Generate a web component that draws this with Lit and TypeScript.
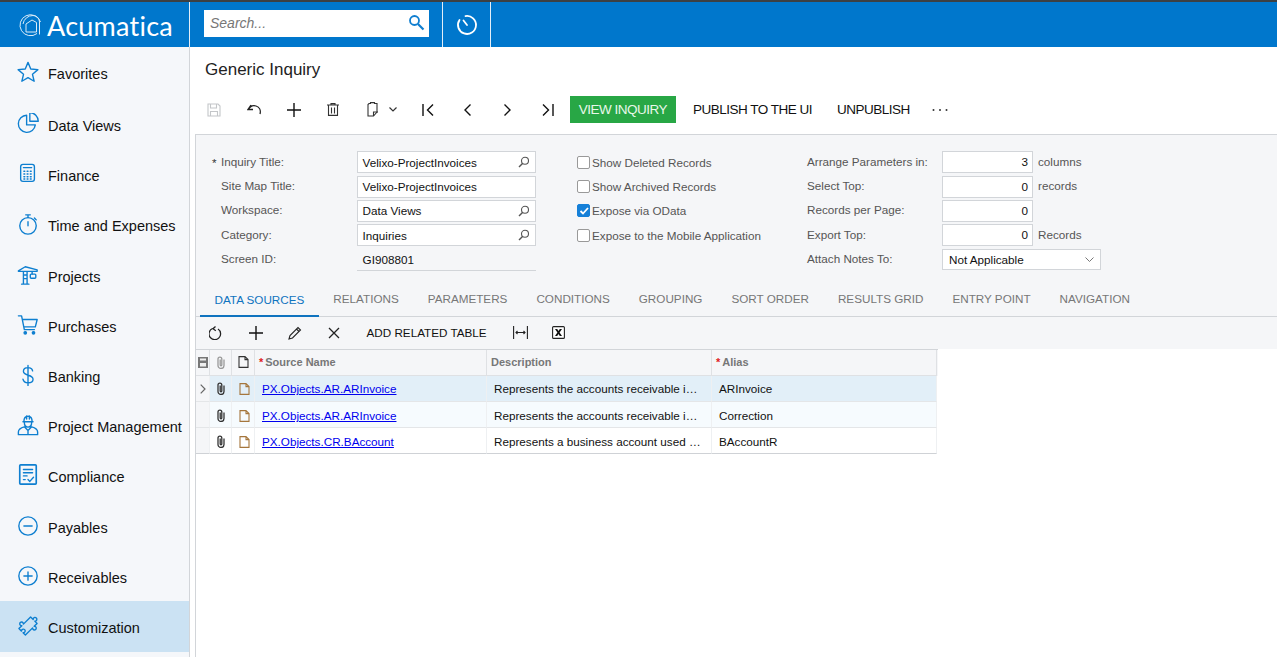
import { LitElement, html, css, svg } from "lit";
import { customElement } from "lit/decorators.js";

const s = (vb: string, w: number, body: any, cls = "") =>
  html`<svg class="ic ${cls}" width=${w} height=${w} viewBox=${vb} fill="none" stroke="currentColor" stroke-width="1.5" stroke-linecap="round" stroke-linejoin="round">${body}</svg>`;

const navIcons: Record<string, any> = {
  star: svg`<path d="M12 1.500l3 7.200 7.800.7-5.900 5.100 1.800 7.600L12 18.100l-6.700 4 1.800-7.600L1.200 9.400 9 8.700z"/>`,
  pie: svg`<g transform="translate(0 -2)"><path d="M10.500 4.500A9.300 9.300 0 1 0 20 15h-9.500z"/><path d="M14 1.500V11h9.200A9.500 9.500 0 0 0 14 1.500z"/></g>`,
  calc: svg`<rect x="4" y="1.500" width="15" height="18.500" rx="2.500"/><path d="M7 5h9M7.500 9h1M11 9h1M14.500 9h1M7.500 12h1M11 12h1M14.500 12h1M7.500 15h1M11 15h1M14.500 15h1M7.500 17.500h1M11 17.500h1M14.500 17.500h1"/>`,
  timer: svg`<circle cx="12" cy="14" r="9"/><path d="M12 9.500V14M9.500 2h5M12 2v3M19 5.500l2 2"/>`,
  crane: svg`<path d="M1.500 7.500L9 3l13 3.500v1.500H1.500zM7 8v14M11 8v14M5 22h8M7 12h4M7 16h4M16.500 8v3"/><rect x="14.500" y="11" width="6" height="4.500" rx="1"/>`,
  cart: svg`<path d="M1.500 2h3.500l3 15h11M6 6h16l-2 8H7.500"/><circle cx="9" cy="20.500" r="1.300" fill="currentColor"/><circle cx="18" cy="20.500" r="1.300" fill="currentColor"/>`,
  dollar: svg`<path d="M17 7.500C16.500 5 14.500 4 12 4 9 4 7 5.500 7 8c0 5.500 10.500 3 10.500 8.500 0 2.500-2.500 4-5.500 4s-5-1.500-5.500-4M12 1.500v22"/>`,
  worker: svg`<path d="M6.500 8.500h11M7.500 8.500c0-8 9-8 9 0M8 9c0 7 8 7 8 0M10.500 2v3.500M13.500 2v3.500M1.500 22.500v-3c0-3 3-4.500 6.500-5.500l4 4 4-4c3.500 1 6.500 2.500 6.500 5.500v3zM12 18v4.500"/>`,
  doc: svg`<rect x="3" y="1" width="18" height="21" rx="1" stroke-width="1.800"/><path d="M7 6h10M7 9.500h10M7 13h4M7 17h2M12 17l2 2 4-4.500"/>`,
  minus: svg`<circle cx="12" cy="12" r="10"/><path d="M7.500 12h9"/>`,
  plus: svg`<circle cx="12" cy="12" r="10"/><path d="M7.500 12h9M12 7.500v9"/>`,
  puzzle: svg`<path transform="rotate(-45 12 12)" d="M3 7h4.500a2 2 0 1 1 2.400 0H21v4a2 2 0 1 1 0 2.400V17h-4.500a2 2 0 1 1-2.400 0H3v-3.600a2 2 0 1 0 0-2.400z"/>`,
};

const nav: [string, string, number, number][] = [
  ["Favorites", "star", 54, 0],
  ["Data Views", "pie", 50, 0],
  ["Finance", "calc", 50, 0],
  ["Time and Expenses", "timer", 50, 0],
  ["Projects", "crane", 51, 0],
  ["Purchases", "cart", 50, 0],
  ["Banking", "dollar", 50, 0],
  ["Project Management", "worker", 50, 0],
  ["Compliance", "doc", 50, 0],
  ["Payables", "minus", 51, 0],
  ["Receivables", "plus", 48, 2],
  ["Customization", "puzzle", 51, 2],
];

const lens = html`<svg class="lens" width="12" height="12" viewBox="0 0 12 12" fill="none" stroke="#555" stroke-width="1.100"><circle cx="7" cy="4.800" r="3.500"/><path d="M4.500 7.500L1 11" stroke-width="1.500"/></svg>`;
const clip = html`<svg width="10" height="13" viewBox="0 0 10 13" fill="none" stroke="currentColor" stroke-width="1.300"><path d="M8 3.500v6a3 3 0 0 1-6 0V3a1.900 1.900 0 0 1 3.800 0v6a.8.8 0 0 1-1.600 0V3.500"/></svg>`;
const page = (c: string) => html`<svg width="11" height="12" viewBox="0 0 11 12" fill="none" stroke=${c} stroke-width="1.100"><path d="M1 .6h6l3 3v7.800H1zM7 .6v3h3"/></svg>`;

const tabs = ["DATA SOURCES", "RELATIONS", "PARAMETERS", "CONDITIONS", "GROUPING", "SORT ORDER", "RESULTS GRID", "ENTRY POINT", "NAVIGATION"];
const rows = [
  ["PX.Objects.AR.ARInvoice", "Represents the accounts receivable i…", "ARInvoice", "sel2"],
  ["PX.Objects.AR.ARInvoice", "Represents the accounts receivable i…", "Correction", "alt low"],
  ["PX.Objects.CR.BAccount", "Represents a business account used …", "BAccountR", "low end"],
];

@customElement("app-root")
export class AppRoot extends LitElement {
  static styles = css`
    :host { display: block; width: 1277px; height: 657px; overflow: hidden; font-family: "Liberation Sans", Arial, sans-serif; background: #fff; color: #000; }
    * { box-sizing: border-box; }
    .top { height: 47px; background: #0077cc; border-top: 2px solid #3c4043; display: flex; color: #fff; }
    .brand { width: 190px; border-right: 1px solid #e3eef8; display: flex; align-items: center; padding-left: 18px; gap: 4px; }
    .brand span { font: 400 27px/1 Lato, sans-serif; letter-spacing: .25px; padding-top: 1px; }
    .searchwrap { width: 253px; border-right: 1px solid #e3eef8; padding: 8px 0 0 14px; }
    .search { width: 225px; height: 27px; background: #fff; display: flex; align-items: center; justify-content: space-between; padding: 0 4px 2px 6px; color: #777; font: italic 14px "Liberation Sans", sans-serif; }
    .clock { width: 48px; border-right: 1px solid #e3eef8; display: flex; align-items: center; justify-content: center; }
    .body { display: flex; height: 610px; }
    .side { width: 190px; background: #f5f7fa; border-right: 1px solid #d2d5d9; flex: none; }
    .nav { display: flex; align-items: center; padding-left: 17px; font-size: 14.500px; color: #111; gap: 9px; }
    .nav.active { background: #cbe2f3; }
    .nav .ic { color: #0e7fd0; flex: none; margin-top: -4px; width: 22px; height: 22px; }
    .main { flex: 1; min-width: 0; }
    .title { font-size: 17px; color: #222; padding: 13px 0 0 15px; height: 49px; line-height: 20px; }
    .tb { display: flex; align-items: center; height: 27px; padding-left: 17px; color: #222; }
    .tbi { width: 40px; height: 27px; display: flex; align-items: center; justify-content: flex-start; flex: none; }
    .tbt { font-size: 13.500px; letter-spacing: -.5px; color: #111; margin-right: 25px; }
    .btn { background: #28a745; color: #e8f7ea; width: 106px; height: 27px; font-size: 13.500px; letter-spacing: -.5px; display: flex; align-items: center; justify-content: center; margin-right: 17px; }
    .content { margin: 11px 0 0 5px; border-left: 1px solid #d2d5d9; height: 523px; }
    .work { background: #f5f6f8; border-top: 1px solid #d2d5d9; height: 215px; }
    .form { display: flex; padding: 15px 0 0 0; font-size: 11.700px; color: #555; height: 148px; }
    .c1 { width: 340px; padding-left: 16px; flex: none; }
    .c2 { width: 271px; padding-left: 41px; flex: none; }
    .c3 { flex: 1; }
    .r { display: flex; align-items: center; height: 24.400px; }
    .lab { width: 145px; padding-left: 9px; position: relative; margin-top: -2px; }
    .req { position: absolute; left: 0; top: 1px; color: #333; }
    .inp { width: 180px; height: 22px; border: 1px solid #d2d5d9; background: #fff; color: #111; display: flex; align-items: center; justify-content: space-between; padding: 0 5px; }
    .inp.ro { background: none; border: 0; border-bottom: 1px solid #d2d5d9; padding-left: 6px; }
    .cb { width: 13px; height: 13px; border: 1px solid #999; border-radius: 2px; background: #fff; margin-right: 2px; flex: none; display: flex; align-items: center; justify-content: center; }
    .cb.on { background: #1580d8; border-color: #1580d8; }
    .lab3 { width: 135px; margin-top: -2px; }
    .num { width: 91px; height: 22px; border: 1px solid #d2d5d9; background: #fff; color: #111; text-align: right; padding: 0 4px; line-height: 20px; }
    .unit { margin-left: 5px; margin-top: -2px; }
    .sel { width: 159px; height: 21px; border: 1px solid #d2d5d9; background: #fff; color: #111; display: flex; align-items: center; justify-content: space-between; padding: 0 6px; }
    .tabs { display: flex; height: 34px; border-bottom: 1px solid #d2d5d9; font-size: 11.700px; color: #777; }
    .tab { padding: 9px 14.500px 0; height: 33px; white-space: nowrap; }
    .tab.on { color: #0f73bf; border-bottom: 2px solid #0f73bf; height: 34px; padding-top: 10px; margin-left: 4px; }
    .gtb { display: flex; align-items: center; height: 33px; padding: 0 0 2px 13px; color: #222; }
    .gi { width: 39.500px; height: 20px; display: flex; align-items: center; flex: none; }
    .gt { font-size: 11.700px; color: #111; width: 147px; flex: none; padding-left: 1px; }
    .grid { border-top: 1px solid #d2d5d9; font-size: 11.700px; width: 742px; }
    .row { display: grid; grid-template-columns: 14px 22px 23px 232px 225px 225px; height: 26px; }
    .row > div { display: flex; align-items: center; border-right: 1px solid #eef0f2; border-bottom: 1px solid #e4e6e8; min-width: 0; }
    .row.low > div { padding-top: 2px; }
    .row.end > div { border-bottom-color: #cfd2d6; }
    .row.h { background: #f5f6f8; color: #777; font-weight: 700; font-size: 11px; }
    .row.h > div { border-right: 1px solid #dfe1e4; border-bottom: 1px solid #dfe1e4; padding-bottom: 1px; }
    .h .t { padding-left: 4px; }
    .h .t b { color: #e02020; font-weight: 700; margin-right: 2px; }
    .g0 { background: #f5f6f8; justify-content: center; color: #666; }
    .gc { justify-content: center; color: #333; }
    .pg { padding-left: 2px; }
    .row.sel2 > div:not(.g0) { background: #e2eff8; }
    .row.sel2 > .src { background: #cbe2f3; }
    .row.alt > div:not(.g0) { background: #f6fbfe; }
    .row > .src { padding-left: 7px; }
    .src a { color: #0000ee; text-decoration: underline; }
    .row > .d { padding-left: 7px; white-space: nowrap; color: #111; }
  `;

  lbl(t: string, req = false) {
    return html`<div class="lab">${req ? html`<span class="req">*</span>` : ""}${t}</div>`;
  }
  chk(t: string, on = false) {
    return html`<div class="r"><span class="cb ${on ? "on" : ""}">${on ? html`<svg width="10" height="10" viewBox="0 0 10 10" fill="none" stroke="#fff" stroke-width="1.800"><path d="M1.500 5l2.500 2.500 5-5.500"/></svg>` : ""}</span><span>${t}</span></div>`;
  }

  render() {
    return html`
      <div class="top">
        <div class="brand">
          <svg width="25" height="25" viewBox="0 0 25 25" fill="none" stroke="#dcecf8" stroke-width="1"><path d="M19 21.500A10.500 10.500 0 1 1 22.500 10"/><path d="M21.500 22.500V10a6.500 6.500 0 0 0-6.500-6.500 10 10 0 0 0-10 8.500"/><path d="M8 20v-8l6-4 4.500 2.500V20z"/></svg>
          <span>Acumatica</span>
        </div>
        <div class="searchwrap"><div class="search"><span>Search...</span>
          <svg width="17" height="17" viewBox="0 0 17 17" fill="none" stroke="#0f7ed0" stroke-width="1.800"><circle cx="6.500" cy="6.500" r="4.500"/><path d="M10 10l5.500 5.500" stroke-width="2.200"/></svg></div></div>
        <div class="clock"><svg width="22" height="22" viewBox="0 0 22 22" fill="none" stroke="#fff" stroke-width="1.800" stroke-linecap="round"><path d="M9.500 2.100A9 9 0 1 1 3.500 6M11 11L7.500 6.500"/></svg></div>
      </div>
      <div class="body">
        <div class="side">
          ${nav.map(([t, i, h, p]) => html`<div class="nav ${t === "Customization" ? "active" : ""}" style="height:${h}px;padding-top:${p}px">${s("0 0 24 24", 22, navIcons[i])}<span>${t}</span></div>`)}
        </div>
        <div class="main">
          <div class="title">Generic Inquiry</div>
          <div class="tb">
            <span class="tbi"><svg width="14" height="14" viewBox="0 0 14 14" fill="none" stroke="#c4c6c9" stroke-width="1.100"><path d="M1 1h10l2 2v10H1zM3.500 1v4h6V1M3.500 13V8.500h7V13"/></svg></span>
            <span class="tbi"><svg width="15" height="12" viewBox="0 0 15 12" fill="none" stroke="#222" stroke-width="1.300"><path d="M4 1L1 5.500h5M1.500 5.500C3 2.500 6 1 9 2c3.500 1.200 5 4.500 4 8"/></svg></span>
            <span class="tbi"><svg width="14" height="14" viewBox="0 0 14 14" stroke="#111" stroke-width="1.400"><path d="M0 7h14M7 0v14"/></svg></span>
            <span class="tbi"><svg width="12" height="13" viewBox="0 0 12 13" fill="none" stroke="#333" stroke-width="1.100"><path d="M0 2h12M4 2V.6h4V2M1.500 2v10.400h9V2M4.500 4.500v6M7.500 4.500v6"/></svg></span>
            <span class="tbi" style="width:56px;gap:10px;margin-left:-1px"><svg width="13" height="15" viewBox="0 0 13 15" fill="none" stroke="#333" stroke-width="1.100"><path d="M3 1.500h1.500V.6h4v.9H11V10l-3.500 4H2V2.500z"/><path d="M7.500 14v-4H12"/></svg><svg width="8" height="5" viewBox="0 0 8 5" fill="none" stroke="#333" stroke-width="1.200"><path d="M.5.5L4 4 7.500.5"/></svg></span>
            <span class="tbi" style="width:42px"><svg width="12" height="12" viewBox="0 0 12 12" fill="none" stroke="#111" stroke-width="1.400"><path d="M1 0v12M11 .5L5.500 6l5.500 5.500"/></svg></span>
            <span class="tbi"><svg width="7" height="12" viewBox="0 0 7 12" fill="none" stroke="#111" stroke-width="1.400"><path d="M6.500.5L1 6l5.500 5.500"/></svg></span>
            <span class="tbi" style="width:38px"><svg width="7" height="12" viewBox="0 0 7 12" fill="none" stroke="#111" stroke-width="1.400"><path d="M.5.5L6 6 .5 11.500"/></svg></span>
            <span class="tbi" style="width:28px"><svg width="12" height="12" viewBox="0 0 12 12" fill="none" stroke="#111" stroke-width="1.400"><path d="M11 0v12M1 .5L6.500 6 1 11.500"/></svg></span>
            <div class="btn">VIEW INQUIRY</div>
            <div class="tbt">PUBLISH TO THE UI</div>
            <div class="tbt" style="margin-right:22px">UNPUBLISH</div>
            <svg width="16" height="4" viewBox="0 0 16 4" fill="#333"><circle cx="1.500" cy="2" r="1"/><circle cx="8" cy="2" r="1"/><circle cx="14.500" cy="2" r="1"/></svg>
          </div>
          <div class="content">
            <div class="work">
              <div class="form">
                <div class="c1">
                  <div class="r">${this.lbl("Inquiry Title:", true)}<div class="inp"><span>Velixo-ProjectInvoices</span>${lens}</div></div>
                  <div class="r">${this.lbl("Site Map Title:")}<div class="inp"><span>Velixo-ProjectInvoices</span></div></div>
                  <div class="r">${this.lbl("Workspace:")}<div class="inp"><span>Data Views</span>${lens}</div></div>
                  <div class="r">${this.lbl("Category:")}<div class="inp"><span>Inquiries</span>${lens}</div></div>
                  <div class="r">${this.lbl("Screen ID:")}<div class="inp ro"><span>GI908801</span></div></div>
                </div>
                <div class="c2">
                  ${this.chk("Show Deleted Records")}
                  ${this.chk("Show Archived Records")}
                  ${this.chk("Expose via OData", true)}
                  ${this.chk("Expose to the Mobile Application")}
                </div>
                <div class="c3">
                  <div class="r"><div class="lab3">Arrange Parameters in:</div><div class="num">3</div><div class="unit">columns</div></div>
                  <div class="r"><div class="lab3">Select Top:</div><div class="num">0</div><div class="unit">records</div></div>
                  <div class="r"><div class="lab3">Records per Page:</div><div class="num">0</div></div>
                  <div class="r"><div class="lab3">Export Top:</div><div class="num">0</div><div class="unit">Records</div></div>
                  <div class="r"><div class="lab3">Attach Notes To:</div><div class="sel"><span>Not Applicable</span><svg width="9" height="5" viewBox="0 0 9 5" fill="none" stroke="#777"><path d="M.5.5L4.500 4.500 8.500.5"/></svg></div></div>
                </div>
              </div>
              <div class="tabs">${tabs.map((t, i) => html`<div class="tab ${i === 0 ? "on" : ""}">${t}</div>`)}</div>
              <div class="gtb">
                <span class="gi"><svg width="13" height="14" viewBox="0 0 13 14" fill="none" stroke="#222" stroke-width="1.300"><path d="M3.500 2.500A5.800 5.800 0 1 0 9 3M6.500.5L4 2.800l2.800 2"/></svg></span>
                <span class="gi"><svg width="14" height="14" viewBox="0 0 14 14" stroke="#111" stroke-width="1.400"><path d="M0 7h14M7 0v14"/></svg></span>
                <span class="gi"><svg width="14" height="14" viewBox="0 0 14 14" fill="none" stroke="#222" stroke-width="1.100"><path d="M1 13l1-3.500L10 1.500l2.500 2.500-8 8zM8.500 3l2.500 2.500"/></svg></span>
                <span class="gi" style="width:38px"><svg width="12" height="12" viewBox="0 0 12 12" stroke="#222" stroke-width="1.300"><path d="M1 1l10 10M11 1L1 11"/></svg></span>
                <span class="gt">ADD RELATED TABLE</span>
                <span class="gi"><svg width="15" height="13" viewBox="0 0 15 13" fill="none" stroke="#222" stroke-width="1.100"><path d="M.6 0v13M14.400 0v13M3 6.500h9M4.500 5L3 6.500 4.500 8M10.500 5L12 6.500 10.500 8"/></svg></span>
                <span class="gi"><svg width="13" height="13" viewBox="0 0 13 13"><rect x=".6" y=".6" width="11.800" height="11.800" rx="1" fill="#fff" stroke="#222" stroke-width="1.100"/><path d="M3 3h2.200l1.300 2 1.300-2H10L7.600 6.500 10 10H7.800L6.500 8 5.200 10H3l2.400-3.500z" fill="#111"/></svg></span>
              </div>
            </div>
            <div class="grid">
              <div class="row h">
                <div class="g0"><svg width="10" height="11" viewBox="0 0 10 11" fill="#777"><path d="M0 0h10v11H0z"/><path d="M2 1.500h6v2H2zM2 6h6v3.500H2z" fill="#eee"/></svg></div>
                <div class="gc" style="color:#999">${clip}</div>
                <div class="gc">${page("#333")}</div>
                <div class="t"><b>*</b>Source Name</div>
                <div class="t">Description</div>
                <div class="t"><b>*</b>Alias</div>
              </div>
              ${rows.map((r, i) => html`
                <div class="row ${r[3]}">
                  <div class="g0">${i === 0 ? html`<svg width="6" height="10" viewBox="0 0 6 10" fill="none" stroke="#666" stroke-width="1.200"><path d="M.7.7L5 5 .7 9.300"/></svg>` : ""}</div>
                  <div class="gc">${clip}</div>
                  <div class="gc pg">${page("#a5763c")}</div>
                  <div class="src"><a>${r[0]}</a></div>
                  <div class="d">${r[1]}</div>
                  <div class="d">${r[2]}</div>
                </div>`)}
            </div>
          </div>
        </div>
      </div>
    `;
  }
}
